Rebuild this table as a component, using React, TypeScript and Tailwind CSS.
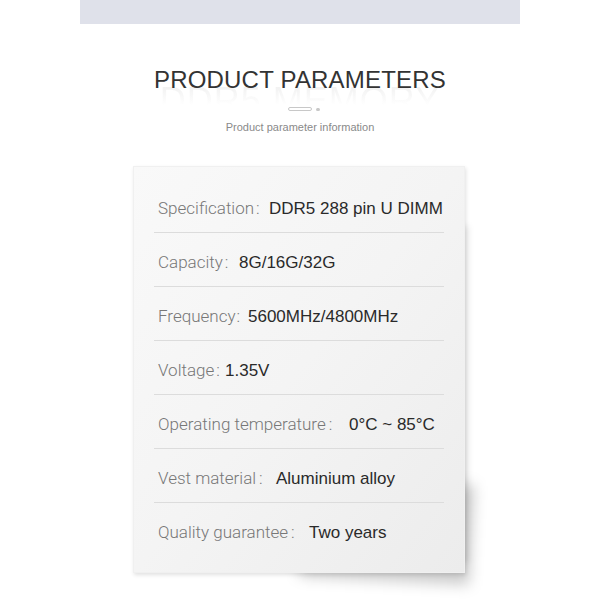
import React from "react";

const rows = [
  { label: "Specification", value: "DDR5 288 pin U DIMM", w: "w-[111px]", c: "ml-[2px]" },
  { label: "Capacity", value: "8G/16G/32G", w: "w-[81px]", c: "ml-[2px]" },
  { label: "Frequency", value: "5600MHz/4800MHz", w: "w-[90px]", c: "ml-[1px]" },
  { label: "Voltage", value: "1.35V", w: "w-[67px]", c: "ml-[2px]" },
  { label: "Operating temperature", value: "0°C ~ 85°C", w: "w-[191px]", c: "ml-[3px]" },
  { label: "Vest material", value: "Aluminium alloy", w: "w-[118px]", c: "ml-[3px]" },
  { label: "Quality guarantee", value: "Two years", w: "w-[151px]", c: "ml-[3px]" },
];

export default function App() {
  return (
    <div className="relative w-[600px] h-[600px] bg-white overflow-hidden" style={{ fontFamily: '"Liberation Sans", Arial, sans-serif' }}>
      <div className="mx-auto w-[440px] h-6 bg-[#dfe1ea]" />

      <div className="relative mt-[42px] flex flex-col items-center">
        <div className="absolute top-[15px] left-0 right-0 flex justify-center h-[24px] overflow-hidden pointer-events-none">
          <span className="text-[36px] leading-[40px] font-normal tracking-[1px] bg-gradient-to-b from-[#eeeeee] via-[#f6f6f6] to-white bg-clip-text text-transparent">
            DDR5 MEMORY
          </span>
        </div>
        <h1 className="relative text-[24px] leading-[28px] text-[#333333] font-normal tracking-[0.2px]">
          PRODUCT PARAMETERS
        </h1>
        <div className="mt-[13px] flex items-center gap-[4px] ml-[8px]">
          <div className="w-[24px] h-[4px] rounded-full border border-[#c8c8c8] bg-white" />
          <div className="w-[4px] h-[3px] rounded-full bg-[#c8c8c8]" />
        </div>
        <p className="mt-[9px] text-[11px] leading-[14px] text-[#8a8a8a]">Product parameter information</p>
      </div>

      <div className="relative ml-[133px] mt-[32px] w-[332px] h-[407px]">
        <div className="absolute right-[-4px] bottom-[-12px] w-[170px] h-[100px] bg-black/20 blur-[7px] rotate-[3deg] origin-bottom-right" />
        <div className="absolute right-[-3px] top-[60px] w-[8px] bottom-[10px] bg-black/10 blur-[3px]" />
        <div className="relative h-full bg-gradient-to-br from-[#f9f9f9] via-[#f4f4f4] to-[#ececec] border border-[#f0f0f0] shadow-[1px_2px_4px_rgba(0,0,0,0.12)] pt-[12px] px-[20px]">
          {rows.map((r, i) => (
            <div
              key={r.label}
              className={`h-[54px] flex items-center pt-[6px] pl-[4px] ${i < rows.length - 1 ? "border-b border-[#dcdcdc]" : ""}`}
            >
              <span className={`inline-flex shrink-0 ${r.w}`} style={{ fontFamily: 'Roboto, "Liberation Sans", sans-serif', fontWeight: 300 }}>
                <span className="text-[17px] text-[#777777] whitespace-nowrap">{r.label}</span>
                <span className={`text-[17px] text-[#777777] ${r.c}`}>:</span>
              </span>
              <span className="text-[17px] text-[#2a2a2a] whitespace-nowrap">{r.value}</span>
            </div>
          ))}
        </div>
      </div>
    </div>
  );
}
